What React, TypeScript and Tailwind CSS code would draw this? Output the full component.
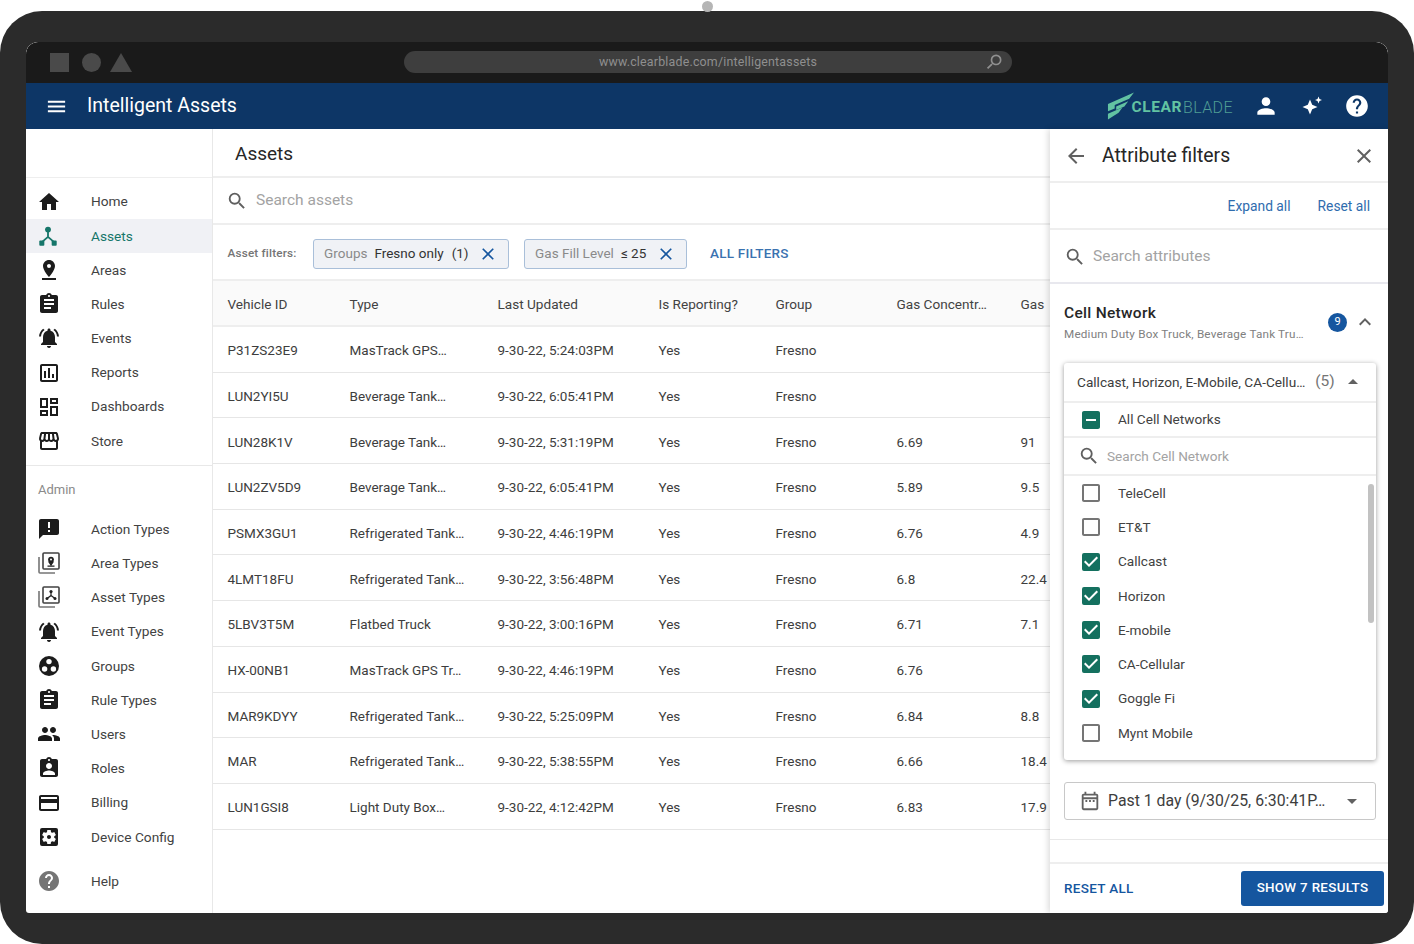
import type { ReactNode } from 'react'
import clsx from 'clsx'
import {
  MdAnnouncement, MdArrowBack, MdArrowDropDown, MdArrowDropUp, MdAssignment, MdAssignmentInd, MdCheckBox,
  MdCheckBoxOutlineBlank, MdClose, MdExpandLess, MdHelp, MdHome, MdIndeterminateCheckBox, MdMenu,
  MdNotificationsActive, MdOutlineAssessment, MdOutlineCreditCard, MdOutlineDashboard, MdOutlineDateRange,
  MdOutlineStorefront, MdPeople, MdPerson, MdPinDrop, MdSearch, MdSettingsApplications,
} from 'react-icons/md'

type NavIconProps = { className?: string }

const HubIcon = ({ className }: NavIconProps) => (
  <svg viewBox="0 0 24 24" className={className} fill="currentColor">
    <circle cx="12" cy="5" r="3.2" />
    <rect x="2.500" y="17" width="5.500" height="5.500" rx="1" />
    <rect x="16" y="17" width="5.500" height="5.500" rx="1" />
    <path d="M12 7v6M12 13l-7 6M12 13l7 6" stroke="currentColor" strokeWidth="2" fill="none" />
  </svg>
)

const GroupsIcon = ({ className }: NavIconProps) => (
  <svg viewBox="0 0 24 24" className={className}>
    <circle cx="12" cy="12" r="10" fill="currentColor" />
    <circle cx="12" cy="7.600" r="2.700" fill="#fff" />
    <circle cx="7.600" cy="15" r="2.700" fill="#fff" />
    <circle cx="16.400" cy="15" r="2.700" fill="#fff" />
  </svg>
)

const StackIcon = ({ className, pin }: NavIconProps & { pin?: boolean }) => (
  <svg viewBox="0 0 24 24" className={className} fill="none">
    <path d="M2 6v15a1 1 0 0 0 1 1h15" stroke="#757575" strokeWidth="1.600" />
    <rect x="6" y="2" width="16" height="16" rx="1" stroke="#424242" strokeWidth="1.600" />
    {pin ? (
      <>
        <circle cx="14" cy="8.600" r="2.900" fill="#212121" />
        <circle cx="14" cy="8.600" r="1" fill="#fff" />
        <path d="M14 14l-2-3h4zM10.500 15.200h7" stroke="#212121" strokeWidth="1.200" fill="#212121" />
      </>
    ) : (
      <>
        <circle cx="14" cy="6.600" r="1.600" fill="#212121" />
        <circle cx="10" cy="13.600" r="1.500" fill="#212121" />
        <circle cx="18" cy="13.600" r="1.500" fill="#212121" />
        <path d="M14 7v3.600l-4 3M14 10.600l4 3" stroke="#212121" strokeWidth="1.200" />
      </>
    )}
  </svg>
)

const SparkIcon = ({ className }: NavIconProps) => (
  <svg viewBox="0 0 24 24" className={className} fill="currentColor">
    <path d="M10 5.500l2.200 5.300 5.300 2.200-5.300 2.200L10 20.500l-2.200-5.300L2.500 13l5.300-2.200z" />
    <path d="M18.500 2.500l1 2.500 2.500 1-2.500 1-1 2.500-1-2.500-2.500-1 2.500-1z" />
  </svg>
)

const Logo = () => (
  <div className="flex items-center text-[#62c2a2]">
    <svg viewBox="0 0 28 28" className="h-[28px] w-[27px]" fill="currentColor">
      <path d="M1 12L28 0l-5 6.500-15 6.500v3.500L1 19.500z" />
      <path d="M9.500 14.500L22 9l-4 5.500-8.500 3.700z" />
      <path d="M1 22l15-6.500-4 5.500L1 28z" />
    </svg>
    <span className="-ml-[3px] mt-[3px] text-[15.5px] font-bold tracking-[0.6px]">CLEAR</span>
    <span className="mt-[3px] ml-[1px] text-[16px] font-light tracking-[0.4px] text-[#4f9c94]">BLADE</span>
  </div>
)

type NavItem = {
  label: string,
  icon: ReactNode,
  active?: boolean,
}

const iconCls = 'h-[24px] w-[24px]'

const primaryNav: NavItem[] = [
  { label: 'Home', icon: <MdHome className={iconCls} /> },
  { label: 'Assets', icon: <HubIcon className="h-[22px] w-[22px] text-[#16766a]" />, active: true },
  { label: 'Areas', icon: <MdPinDrop className={iconCls} /> },
  { label: 'Rules', icon: <MdAssignment className={iconCls} /> },
  { label: 'Events', icon: <MdNotificationsActive className={iconCls} /> },
  { label: 'Reports', icon: <MdOutlineAssessment className={iconCls} /> },
  { label: 'Dashboards', icon: <MdOutlineDashboard className={iconCls} /> },
  { label: 'Store', icon: <MdOutlineStorefront className={iconCls} /> },
]

const adminNav: NavItem[] = [
  { label: 'Action Types', icon: <MdAnnouncement className={iconCls} /> },
  { label: 'Area Types', icon: <StackIcon pin className={iconCls} /> },
  { label: 'Asset Types', icon: <StackIcon className={iconCls} /> },
  { label: 'Event Types', icon: <MdNotificationsActive className={iconCls} /> },
  { label: 'Groups', icon: <GroupsIcon className={iconCls} /> },
  { label: 'Rule Types', icon: <MdAssignment className={iconCls} /> },
  { label: 'Users', icon: <MdPeople className={iconCls} /> },
  { label: 'Roles', icon: <MdAssignmentInd className={iconCls} /> },
  { label: 'Billing', icon: <MdOutlineCreditCard className={iconCls} /> },
  { label: 'Device Config', icon: <MdSettingsApplications className={iconCls} /> },
]

const NavRow = ({ item }: { item: NavItem }) => (
  <div className={clsx('flex h-[34.2px] items-center pl-[11px] text-[13.7px]', item.active ? 'bg-[#f0f1f5] text-[#16766a]' : 'text-[#424242]')}>
    <span className={clsx('flex w-[54px] shrink-0', !item.active && 'text-[#1c1c1c]')}>{item.icon}</span>
    {item.label}
  </div>
)

const Sidebar = () => (
  <aside className="flex w-[187px] shrink-0 flex-col border-r border-[#e8e8e8]">
    <div className="h-[49px] shrink-0 border-b border-[#eeeeee]" />
    <div className="pt-[6.5px] pb-[6.5px]">
      {primaryNav.map(item => <NavRow key={item.label} item={item} />)}
    </div>
    <div className="border-t border-[#e8e8e8] pt-[15px] pl-[12px] text-[13px] leading-[18px] text-[#8a8a8a]">Admin</div>
    <div className="pt-[13.5px]">
      {adminNav.map(item => <NavRow key={item.label} item={item} />)}
    </div>
    <div className="mt-[10px]">
      <NavRow item={{ label: 'Help', icon: <MdHelp className="h-[24px] w-[24px] text-[#757575]" /> }} />
    </div>
  </aside>
)

type AssetRow = [string, string, string, string, string, string, string]

const rows: AssetRow[] = [
  ['P31ZS23E9', 'MasTrack GPS…', '9-30-22, 5:24:03PM', 'Yes', 'Fresno', '', ''],
  ['LUN2YI5U', 'Beverage Tank…', '9-30-22, 6:05:41PM', 'Yes', 'Fresno', '', ''],
  ['LUN28K1V', 'Beverage Tank…', '9-30-22, 5:31:19PM', 'Yes', 'Fresno', '6.69', '91'],
  ['LUN2ZV5D9', 'Beverage Tank…', '9-30-22, 6:05:41PM', 'Yes', 'Fresno', '5.89', '9.5'],
  ['PSMX3GU1', 'Refrigerated Tank…', '9-30-22, 4:46:19PM', 'Yes', 'Fresno', '6.76', '4.9'],
  ['4LMT18FU', 'Refrigerated Tank…', '9-30-22, 3:56:48PM', 'Yes', 'Fresno', '6.8', '22.4'],
  ['5LBV3T5M', 'Flatbed Truck', '9-30-22, 3:00:16PM', 'Yes', 'Fresno', '6.71', '7.1'],
  ['HX-00NB1', 'MasTrack GPS Tr…', '9-30-22, 4:46:19PM', 'Yes', 'Fresno', '6.76', ''],
  ['MAR9KDYY', 'Refrigerated Tank…', '9-30-22, 5:25:09PM', 'Yes', 'Fresno', '6.84', '8.8'],
  ['MAR', 'Refrigerated Tank…', '9-30-22, 5:38:55PM', 'Yes', 'Fresno', '6.66', '18.4'],
  ['LUN1GSI8', 'Light Duty Box…', '9-30-22, 4:12:42PM', 'Yes', 'Fresno', '6.83', '17.9'],
]

const columns = ['Vehicle ID', 'Type', 'Last Updated', 'Is Reporting?', 'Group', 'Gas Concentr…', 'Gas']

const gridCols = 'grid grid-cols-[122px_148px_161px_117px_121px_124px_28px] items-center pl-[14.5px] whitespace-nowrap'

const FilterChip = ({ name, value, count, width }: { name: string, value: string, count?: string, width: string }) => (
  <div className={clsx('flex h-[30px] items-center rounded-[3px] border border-[#a9bfd9] bg-[#f0f2f6] pl-[10px] pr-[10px] text-[13.5px] text-[#8a8a8a]', width)}>
    {name}
    <span className="ml-[7px] text-[#333333]">{value}</span>
    {count && <span className="ml-[8px] text-[#333333]">{count}</span>}
    <MdClose className="ml-auto h-[20px] w-[20px] text-[#15569f]" />
  </div>
)

const AssetsMain = () => (
  <main className="flex min-w-0 flex-1 flex-col overflow-hidden">
    <div className="flex h-[49px] shrink-0 items-center border-b-2 border-[#eeeeee] pl-[22px] pt-[3px] text-[19px] text-[#262626]">Assets</div>
    <div className="flex h-[47px] shrink-0 items-center border-b-2 border-[#eeeeee] pl-[13px] pt-[1px] text-[15.5px] text-[#a3a3a3]">
      <MdSearch className="mr-[8px] h-[22px] w-[22px] text-[#5f5f5f]" />
      Search assets
    </div>
    <div className="flex h-[56px] shrink-0 items-center border-b-2 border-[#eeeeee] pl-[14.5px] pt-[3px]">
      <span className="mr-[16.5px] text-[11.7px] font-medium tracking-[0.2px] text-[#757575]">Asset filters:</span>
      <FilterChip name="Groups" value="Fresno only" count="(1)" width="w-[196px]" />
      <span className="w-[15px]" />
      <FilterChip name="Gas Fill Level" value="≤ 25" width="w-[163px]" />
      <span className="ml-[23px] text-[13.5px] font-medium tracking-[0.2px] text-[#3a72b0]">ALL FILTERS</span>
    </div>
    <div className={clsx(gridCols, 'h-[46px] shrink-0 border-b-2 border-[#eeeeee] bg-[#fafafa] pt-[3px] text-[13.6px] text-[#424242]')}>
      {columns.map(col => <span key={col}>{col}</span>)}
    </div>
    {rows.map(row => (
      <div key={row[0]} className={clsx(gridCols, 'h-[45.7px] shrink-0 border-b border-[#e6e6e6] pt-[2px] text-[13.5px] text-[#3d3d3d]')}>
        {row.map((cell, index) => <span key={index}>{cell}</span>)}
      </div>
    ))}
  </main>
)

const networks = [
  { name: 'TeleCell', checked: false },
  { name: 'ET&T', checked: false },
  { name: 'Callcast', checked: true },
  { name: 'Horizon', checked: true },
  { name: 'E-mobile', checked: true },
  { name: 'CA-Cellular', checked: true },
  { name: 'Goggle Fi', checked: true },
  { name: 'Mynt Mobile', checked: false },
]

const NetworkOption = ({ name, checked }: { name: string, checked: boolean }) => (
  <div className="flex h-[34.25px] items-center pl-[15px] text-[13.6px] text-[#424242]">
    {checked
      ? <MdCheckBox className="mr-[15px] h-[24px] w-[24px] text-[#14705f]" />
      : <MdCheckBoxOutlineBlank className="mr-[15px] h-[24px] w-[24px] text-[#757575]" />}
    {name}
  </div>
)

const NetworkDropdown = () => (
  <div className="ml-[14px] mr-[12px] flex h-[397px] flex-col rounded-[3px] bg-white shadow-[0_1px_5px_rgba(0,0,0,0.4)]">
    <div className="flex h-[40px] shrink-0 items-center border-b-2 border-[#eeeeee] pl-[13px] pr-[11px] text-[13.65px] text-[#3d3d3d]">
      Callcast, Horizon, E-Mobile, CA-Cellu…
      <span className="ml-[10px] text-[15.5px] text-[#757575]">(5)</span>
      <MdArrowDropUp className="ml-auto h-[24px] w-[24px] text-[#616161]" />
    </div>
    <div className="flex h-[35px] shrink-0 items-center border-b-2 border-[#eeeeee] pl-[15px] text-[13.6px] text-[#424242]">
      <MdIndeterminateCheckBox className="mr-[15px] h-[24px] w-[24px] text-[#14705f]" />
      All Cell Networks
    </div>
    <div className="flex h-[38px] shrink-0 items-center border-b-2 border-[#eeeeee] pl-[14px] text-[13.6px] text-[#a3a3a3]">
      <MdSearch className="mr-[7px] h-[22px] w-[22px] text-[#5f5f5f]" />
      Search Cell Network
    </div>
    <div className="relative flex-1">
      {networks.map(network => <NetworkOption key={network.name} {...network} />)}
      <div className="absolute top-[8px] right-[2px] h-[139px] w-[6px] rounded-full bg-[#c2c2c2]" />
    </div>
  </div>
)

const AttributePanel = () => (
  <aside className="relative z-10 flex w-[338px] shrink-0 flex-col bg-white shadow-[-2px_0_6px_rgba(0,0,0,0.14)]">
    <div className="flex h-[54px] shrink-0 items-center border-b-2 border-[#eeeeee] pl-[14px] pr-[12px] pt-[1px] text-[19.4px] text-[#262626]">
      <MdArrowBack className="mr-[14px] h-[24px] w-[24px] text-[#616161]" />
      Attribute filters
      <MdClose className="ml-auto h-[24px] w-[24px] text-[#616161]" />
    </div>
    <div className="flex h-[47px] shrink-0 items-center justify-end gap-[27px] border-b-2 border-[#eeeeee] pr-[18px] pt-[1px] text-[13.8px] text-[#2f6cae]">
      <span>Expand all</span>
      <span>Reset all</span>
    </div>
    <div className="flex h-[54px] shrink-0 items-center border-b-2 border-[#e8e8ee] pl-[14px] pt-[1px] text-[15.5px] text-[#a3a3a3]">
      <MdSearch className="mr-[7px] h-[22px] w-[22px] text-[#5f5f5f]" />
      Search attributes
    </div>
    <div className="flex h-[79px] shrink-0 items-start pl-[14px] pr-[11px] pt-[19px]">
      <div className="flex-1">
        <div className="text-[15.5px] leading-[20px] font-medium tracking-[0.3px] text-[#262626]">Cell Network</div>
        <div className="mt-[3px] text-[11.7px] leading-[16px] tracking-[0.2px] text-[#808080]">Medium Duty Box Truck, Beverage Tank Tru…</div>
      </div>
      <span className="mt-[10px] flex h-[19px] w-[19px] items-center justify-center rounded-full bg-[#15569f] text-[11px] text-white">9</span>
      <MdExpandLess className="ml-[6px] mt-[7px] h-[24px] w-[24px] text-[#616161]" />
    </div>
    <NetworkDropdown />
    <div className="ml-[14px] mr-[12px] mt-[22px] flex h-[38px] shrink-0 items-center rounded-[3px] border border-[#c8c8c8] pl-[14px] pr-[11px] text-[15.8px] text-[#3d3d3d]">
      <MdOutlineDateRange className="mr-[7px] h-[22px] w-[22px] text-[#616161]" />
      Past 1 day (9/30/25, 6:30:41P…
      <MdArrowDropDown className="ml-auto h-[24px] w-[24px] text-[#616161]" />
    </div>
    <div className="mt-[19px] h-[23px] shrink-0 border-t border-[#e8e8e8]" />
    <div className="flex flex-1 items-center border-t-2 border-[#eeeeee] pl-[14px] pr-[4px]">
      <span className="text-[13.5px] font-medium tracking-[0.3px] text-[#15569f]">RESET ALL</span>
      <span className="ml-auto flex h-[35px] w-[143px] items-center justify-center rounded-[3px] bg-[#15569f] text-[13.4px] font-medium tracking-[0.3px] text-white">SHOW 7 RESULTS</span>
    </div>
  </aside>
)

const BrowserBar = () => (
  <div className="flex h-[41px] shrink-0 items-center rounded-t-[12px] bg-[#1a1a1a] pb-[1px] pl-[24px]">
    <span className="h-[19px] w-[19px] bg-[#4a4a4a]" />
    <span className="ml-[13px] h-[19px] w-[19px] rounded-full bg-[#4a4a4a]" />
    <span className="ml-[9px] h-0 w-0 border-x-[11px] border-b-[19px] border-x-transparent border-b-[#4a4a4a]" />
    <div className="relative ml-[272px] flex h-[22px] w-[608px] items-center justify-center rounded-full bg-[#3e3e3e] text-[12.4px] tracking-[0.2px] text-[#8f8f8f]">
      www.clearblade.com/intelligentassets
      <MdSearch className="absolute right-[8px] h-[20px] w-[20px] -scale-x-100 text-[#8f8f8f]" />
    </div>
  </div>
)

const AppHeader = () => (
  <header className="flex h-[46px] shrink-0 items-center bg-[#0d3666] pl-[19px] pr-[18px] text-white">
    <MdMenu className="h-[23px] w-[23px]" />
    <span className="ml-[19px] text-[19.5px]">Intelligent Assets</span>
    <div className="ml-auto flex items-center">
      <Logo />
      <MdPerson className="ml-[20px] h-[26px] w-[26px]" />
      <SparkIcon className="ml-[21px] h-[24px] w-[24px]" />
      <MdHelp className="ml-[20px] h-[26px] w-[26px]" />
    </div>
  </header>
)

export default function App() {
  return (
    <div className="relative h-[944px] w-[1414px] overflow-hidden bg-white pt-[11px] font-[Roboto,sans-serif]">
      <div className="absolute top-[1px] left-[702px] h-[11px] w-[11px] rounded-full bg-[#b5b5b5]" />
      <div className="h-[933px] rounded-[42px] bg-[#2b2b2b] px-[26px] pt-[31px] pb-[31px]">
        <div className="flex h-[871px] flex-col overflow-hidden rounded-t-[12px] rounded-b-[3px] bg-white">
          <BrowserBar />
          <AppHeader />
          <div className="flex min-h-0 flex-1">
            <Sidebar />
            <AssetsMain />
            <AttributePanel />
          </div>
        </div>
      </div>
    </div>
  )
}
